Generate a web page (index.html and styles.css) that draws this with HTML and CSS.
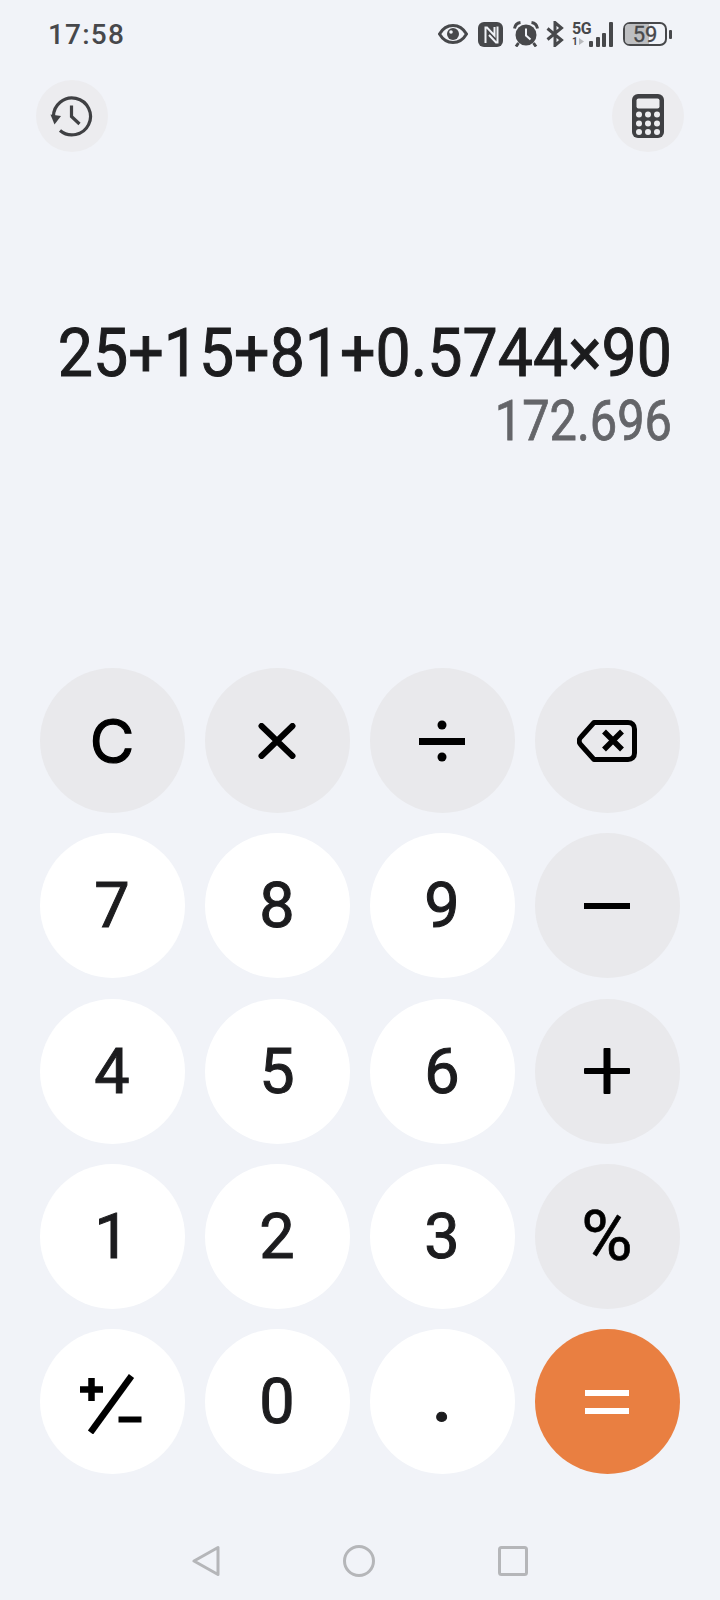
FILE: index.html
```html
<!DOCTYPE html>
<html lang="en">
<head>
    <meta charset="UTF-8">
    <meta name="viewport" content="width=device-width, initial-scale=1.0">
    <title>Calculator</title>
    <link rel="stylesheet" href="styles.css">
</head>
<body>
    <div class="status-bar">
        <span class="time">17:58</span>
        <div class="status-icons">
            <svg width="30" height="22" viewBox="0 0 30 22"><path d="M1.500 11C5 5 9.500 2.500 15 2.500S25 5 28.500 11C25 17 20.500 19.500 15 19.500S5 17 1.500 11Z" fill="none" stroke="#47484b" stroke-width="3"/><circle cx="15" cy="11" r="6" fill="#47484b"/><circle cx="13" cy="9" r="1.800" fill="#f1f3f8"/></svg>
            <svg width="25" height="25" viewBox="0 0 25 25"><rect width="25" height="25" rx="6" fill="#47484b"/><path d="M7.500 21V5.500H9L16.500 13.500V5" fill="none" stroke="#f1f3f8" stroke-width="2"/><path d="M19.500 4.500v16H18l-7-7.500" fill="none" stroke="#f1f3f8" stroke-width="2"/></svg>
            <svg width="26" height="26" viewBox="0 0 26 26"><circle cx="13" cy="14" r="10.500" fill="#47484b"/><path d="M1.500 7.500C2 4 4 2 7.500 1.500M24.500 7.500C24 4 22 2 18.500 1.500M5.500 22 3 25.500M20.500 22l2.500 3.500" stroke="#47484b" stroke-width="3" fill="none"/><path d="M13 7.500v7l4.500 4" stroke="#f1f3f8" stroke-width="2" fill="none"/></svg>
            <svg class="ic-bt" width="18" height="26" viewBox="0 0 18 26"><path d="M1.500 7.500 15.500 19 9 24.500V1.500L15.500 7 1.500 18.500" fill="none" stroke="#47484b" stroke-width="3"/></svg>
            <div class="signal">
                <div class="net">
                    <span class="net-5g">5G</span>
                    <span class="net-sim">1<svg width="5" height="7" viewBox="0 0 5 7"><path d="M0 0l5 3.500L0 7Z" fill="#b9babd"/></svg></span>
                </div>
                <div class="bars">
                    <i class="bar bar-1"></i>
                    <i class="bar bar-2"></i>
                    <i class="bar bar-3"></i>
                    <i class="bar bar-4"></i>
                </div>
            </div>
            <div class="battery">
                <div class="battery-body">
                    <div class="battery-fill"></div>
                    <span class="battery-level">59</span>
                </div>
                <div class="battery-tip"></div>
            </div>
        </div>
    </div>

    <div class="toolbar">
        <button class="tool-button">
            <svg width="44" height="44" viewBox="0 0 44 44"><path d="M3.500 23A18.500 18.500 0 1 1 10 36.500" fill="none" stroke="#3f4043" stroke-width="3.200"/><path d="M0.500 20.500l10.500 1.500-6.500 8.500Z" fill="#3f4043"/><path d="M21.500 11.500v11l8 7.500" fill="none" stroke="#3f4043" stroke-width="3.200"/></svg>
        </button>
        <button class="tool-button">
            <svg width="32" height="44" viewBox="0 0 32 44"><rect width="32" height="44" rx="6" fill="#3f4043"/><rect x="4.500" y="4.500" width="23" height="10" rx="2" fill="#ececef"/><g fill="#ececef"><circle cx="7" cy="20.500" r="3"/><circle cx="16" cy="20.500" r="3"/><circle cx="25" cy="20.500" r="3"/><circle cx="7" cy="29.500" r="3"/><circle cx="16" cy="29.500" r="3"/><circle cx="25" cy="29.500" r="3"/><circle cx="7" cy="38" r="3"/><circle cx="16" cy="38" r="3"/><circle cx="25" cy="38" r="3"/></g></svg>
        </button>
    </div>

    <div class="display">
        <div class="expression">25+15+81+0.5744×90</div>
        <div class="result">172.696</div>
    </div>

    <div class="keypad">
        <button class="key key-op key-clear">C</button>
        <button class="key key-op" aria-label="multiply">
            <svg width="38" height="36" viewBox="0 0 38 36"><path d="M3.500 3l31 30M34.500 3l-31 30" stroke="#000" stroke-width="6" stroke-linecap="round"/></svg>
        </button>
        <button class="key key-op" aria-label="divide">
            <svg width="46" height="46" viewBox="0 0 46 46"><rect y="20" width="46" height="7" fill="#000"/><circle cx="23" cy="7" r="4.500"/><circle cx="23" cy="39" r="4.500"/></svg>
        </button>
        <button class="key key-op" aria-label="delete">
            <svg width="60" height="42" viewBox="0 0 60 42"><path d="M17 2.500h34c4 0 6.500 2.500 6.500 6.500v24c0 4-2.500 6.500-6.500 6.500H17L4 25c-2.500-2.500-2.500-5.500 0-8Z" fill="none" stroke="#000" stroke-width="5" stroke-linejoin="round"/><path d="M27 11.500l18 18M45 11.500l-18 18" stroke="#000" stroke-width="5.500"/></svg>
        </button>

        <button class="key">7</button>
        <button class="key">8</button>
        <button class="key">9</button>
        <button class="key key-op" aria-label="minus">
            <svg width="46" height="6" viewBox="0 0 46 6"><rect width="46" height="6" fill="#000"/></svg>
        </button>

        <button class="key">4</button>
        <button class="key">5</button>
        <button class="key">6</button>
        <button class="key key-op" aria-label="plus">
            <svg width="46" height="46" viewBox="0 0 46 46"><rect y="20" width="46" height="6" rx="1" fill="#000"/><rect x="19.500" width="7" height="46" rx="1" fill="#000"/></svg>
        </button>

        <button class="key">1</button>
        <button class="key">2</button>
        <button class="key">3</button>
        <button class="key key-op key-percent">%</button>

        <button class="key" aria-label="toggle sign">
            <svg width="64" height="64" viewBox="0 0 64 64"><path d="M0 19.500h23M11.500 8v23" stroke="#000" stroke-width="6.500"/><path d="M51.500 6 10.500 62.500" stroke="#000" stroke-width="6.500"/><path d="M38.500 49.500h23" stroke="#000" stroke-width="6"/></svg>
        </button>
        <button class="key">0</button>
        <button class="key key-dot">.</button>
        <button class="key key-equals" aria-label="equals">
            <svg width="44" height="26" viewBox="0 0 44 26"><rect y="1" width="44" height="6" fill="#fff"/><rect y="19" width="44" height="6" fill="#fff"/></svg>
        </button>
    </div>

    <div class="nav-bar">
        <svg width="28" height="32" viewBox="0 0 28 32"><path d="M26 2.500v27L2 16Z" fill="none" stroke="#b5b6b9" stroke-width="3" stroke-linejoin="round"/></svg>
        <svg width="32" height="32" viewBox="0 0 32 32"><circle cx="16" cy="16" r="14.500" fill="none" stroke="#b5b6b9" stroke-width="3"/></svg>
        <svg width="30" height="30" viewBox="0 0 30 30"><rect x="1.500" y="1.500" width="27" height="27" rx="2" fill="none" stroke="#b5b6b9" stroke-width="3"/></svg>
    </div>
</body>
</html>
```

FILE: styles.css
```css
body {
    margin: 0;
    width: 720px;
    height: 1600px;
    overflow: hidden;
    background: #f1f3f8;
    font-family: Roboto, "Liberation Sans", sans-serif;
    color: #1c1c1e;
}

button {
    border: none;
    padding: 0;
    font-family: inherit;
}

.status-bar {
    height: 68px;
    display: flex;
    justify-content: space-between;
    align-items: center;
    padding: 0 48px;
}

.time {
    font-size: 28px;
    font-weight: 500;
    letter-spacing: 1.2px;
    color: #47484b;
}

.status-icons {
    display: flex;
    align-items: center;
    gap: 10px;
}

.ic-bt {
    margin-left: -3px;
}

.signal {
    display: flex;
    align-items: flex-end;
    height: 26px;
    width: 40px;
    margin-left: -2px;
}

.net {
    width: 17px;
    display: flex;
    flex-direction: column;
    color: #47484b;
    font-weight: 700;
}

.net-5g {
    font-size: 16px;
    line-height: 15px;
    letter-spacing: -0.5px;
}

.net-sim {
    display: flex;
    align-items: center;
    gap: 1px;
    font-size: 10px;
    line-height: 11px;
}

.bars {
    display: flex;
    align-items: flex-end;
    gap: 2.5px;
}

.bar {
    width: 4px;
    background: #47484b;
    border-radius: 1px;
}

.bar-1 { height: 6px; }
.bar-2 { height: 10px; }
.bar-3 { height: 14px; }
.bar-4 { height: 25px; }

.battery {
    display: flex;
    align-items: center;
    gap: 2px;
    margin-left: 1px;
}

.battery-body {
    position: relative;
    box-sizing: border-box;
    width: 44px;
    height: 24px;
    border: 2.5px solid #47484b;
    border-radius: 7px;
    display: flex;
    align-items: center;
    justify-content: center;
}

.battery-fill {
    position: absolute;
    left: 0;
    top: 0;
    bottom: 0;
    width: 59%;
    background: #bdbec1;
    border-radius: 4px 0 0 4px;
}

.battery-level {
    position: relative;
    font-size: 22px;
    line-height: 19px;
    -webkit-text-stroke: 0.3px #47484b;
    color: #47484b;
}

.battery-tip {
    width: 3px;
    height: 9px;
    background: #47484b;
    border-radius: 1px;
}

.toolbar {
    display: flex;
    justify-content: space-between;
    padding: 12px 36px 0;
}

.tool-button {
    width: 72px;
    height: 72px;
    border-radius: 50%;
    background: #ececef;
    display: flex;
    align-items: center;
    justify-content: center;
}

.display {
    height: 516px;
    box-sizing: border-box;
    padding: 161px 48px 0 0;
    text-align: right;
}

.expression {
    font-size: 67px;
    line-height: 80px;
    -webkit-text-stroke: 1px #1c1c1e;
    color: #1c1c1e;
    transform: scaleX(0.935);
    transform-origin: right center;
}

.result {
    font-size: 56px;
    line-height: 56px;
    -webkit-text-stroke: 0.8px #646569;
    color: #646569;
    transform: scaleX(0.87);
    transform-origin: right center;
}

.keypad {
    display: grid;
    grid-template-columns: repeat(4, 145px);
    grid-auto-rows: 145px;
    column-gap: 20px;
    row-gap: 20.25px;
    padding: 0 40px 0 39.5px;
}

.key {
    border-radius: 50%;
    background: #fff;
    color: #1c1c1e;
    font-size: 63px;
    -webkit-text-stroke: 1px #1c1c1e;
    display: flex;
    align-items: center;
    justify-content: center;
}

.key-op {
    background: #e9e9ec;
    color: #000;
    -webkit-text-stroke: 0.7px #000;
}

.key-clear {
    font-family: Inter, Roboto, sans-serif;
    font-size: 61px;
    -webkit-text-stroke: 1.2px #000;
}

.key-percent {
    font-size: 70px;
}

.key-dot {
    font-weight: 700;
    padding-bottom: 4px;
}

.key-equals {
    background: #e97f41;
}

.nav-bar {
    display: flex;
    justify-content: center;
    align-items: center;
    gap: 123px;
    margin-top: 71px;
}
```
